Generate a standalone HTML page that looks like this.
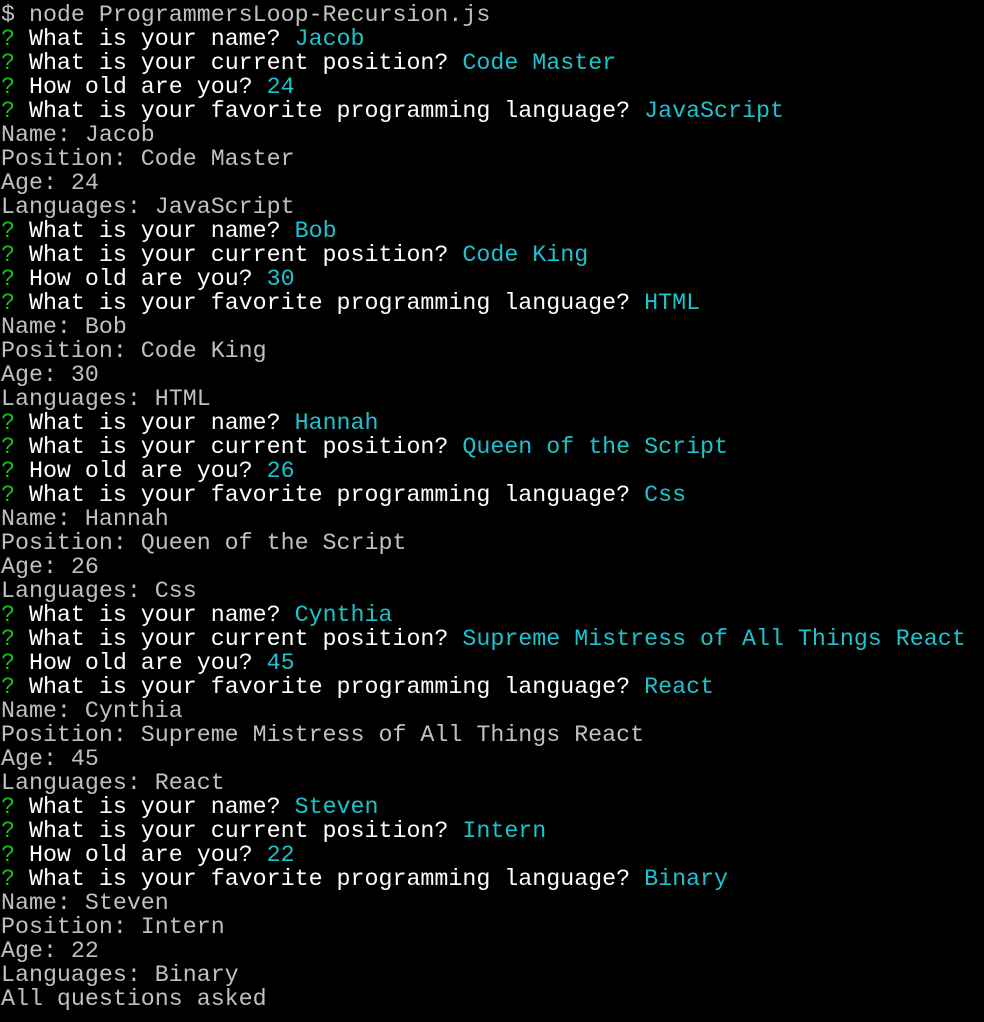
<!DOCTYPE html>
<html><head><meta charset="utf-8"><style>
html,body{margin:0;padding:0;background:#000;width:984px;height:1022px;overflow:hidden}
pre{margin:0;padding:3px 0 0 1px;font-family:"Liberation Mono","DejaVu Sans Mono",monospace;font-size:23.3px;line-height:24px;color:#c0c0c0;white-space:pre}
.g{color:#13c40f}.w{color:#fff}.c{color:#1cc3cc}
</style></head><body><pre>$ node ProgrammersLoop-Recursion.js
<span class="g">?</span> <span class="w">What is your name?</span> <span class="c">Jacob</span>
<span class="g">?</span> <span class="w">What is your current position?</span> <span class="c">Code Master</span>
<span class="g">?</span> <span class="w">How old are you?</span> <span class="c">24</span>
<span class="g">?</span> <span class="w">What is your favorite programming language?</span> <span class="c">JavaScript</span>
Name: Jacob
Position: Code Master
Age: 24
Languages: JavaScript
<span class="g">?</span> <span class="w">What is your name?</span> <span class="c">Bob</span>
<span class="g">?</span> <span class="w">What is your current position?</span> <span class="c">Code King</span>
<span class="g">?</span> <span class="w">How old are you?</span> <span class="c">30</span>
<span class="g">?</span> <span class="w">What is your favorite programming language?</span> <span class="c">HTML</span>
Name: Bob
Position: Code King
Age: 30
Languages: HTML
<span class="g">?</span> <span class="w">What is your name?</span> <span class="c">Hannah</span>
<span class="g">?</span> <span class="w">What is your current position?</span> <span class="c">Queen of the Script</span>
<span class="g">?</span> <span class="w">How old are you?</span> <span class="c">26</span>
<span class="g">?</span> <span class="w">What is your favorite programming language?</span> <span class="c">Css</span>
Name: Hannah
Position: Queen of the Script
Age: 26
Languages: Css
<span class="g">?</span> <span class="w">What is your name?</span> <span class="c">Cynthia</span>
<span class="g">?</span> <span class="w">What is your current position?</span> <span class="c">Supreme Mistress of All Things React</span>
<span class="g">?</span> <span class="w">How old are you?</span> <span class="c">45</span>
<span class="g">?</span> <span class="w">What is your favorite programming language?</span> <span class="c">React</span>
Name: Cynthia
Position: Supreme Mistress of All Things React
Age: 45
Languages: React
<span class="g">?</span> <span class="w">What is your name?</span> <span class="c">Steven</span>
<span class="g">?</span> <span class="w">What is your current position?</span> <span class="c">Intern</span>
<span class="g">?</span> <span class="w">How old are you?</span> <span class="c">22</span>
<span class="g">?</span> <span class="w">What is your favorite programming language?</span> <span class="c">Binary</span>
Name: Steven
Position: Intern
Age: 22
Languages: Binary
All questions asked</pre></body></html>
